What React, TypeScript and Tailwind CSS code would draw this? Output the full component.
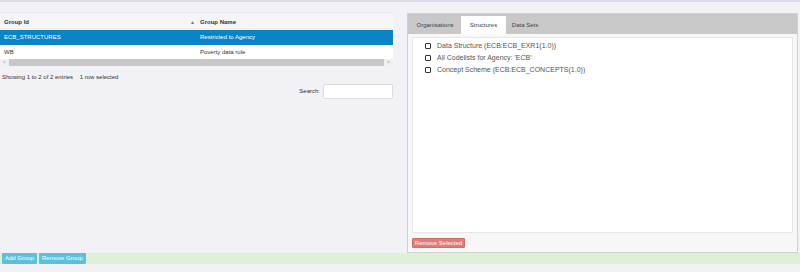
import React from "react";

export default function App() {
  const font = { fontFamily: '"Liberation Sans", Arial, sans-serif' };
  return (
    <div className="w-[800px] h-[272px] bg-[#f2f2f6] flex flex-col overflow-hidden text-[#333]" style={font}>
      <div className="h-[2px] bg-[#dcdce6]" />
      <div className="flex h-[251px]">
        {/* Left */}
        <div className="w-[393px] pt-[10px] flex flex-col">
          <div className="border-t border-[#e8e8ee] h-[18px] flex items-end pb-[4px] text-[6px] leading-[7px] font-bold bg-[#f5f5f8]">
            <div className="w-[190px] pl-[4px]">Group Id</div>
            <div className="w-[8px] text-[5px] text-[#777] font-normal">▲</div>
            <div className="pl-[2px]">Group Name</div>
          </div>
          <div className="h-[15px] flex items-center text-[6px] bg-[#0a84c4] text-white">
            <div className="w-[200px] pl-[4px]">ECB_STRUCTURES</div>
            <div>Restricted to Agency</div>
          </div>
          <div className="h-[14px] flex items-center text-[6px] bg-white">
            <div className="w-[200px] pl-[4px]">WB</div>
            <div>Poverty data rule</div>
          </div>
          <div className="h-[7px] flex items-center bg-[#f0f0f0]">
            <div className="w-[9px] text-[5px] text-[#888] text-center leading-none">&lt;</div>
            <div className="flex-1 h-full bg-[#c8c8c8]" />
            <div className="w-[9px] text-[5px] text-[#888] text-center leading-none">&gt;</div>
          </div>
          <div className="text-[6px] pl-[2px] mt-[7px] leading-[8px] whitespace-pre">
            {"Showing 1 to 2 of 2 entries    1 row selected"}
          </div>
          <div className="flex justify-end items-center mt-[3px]">
            <span className="text-[6px] mr-[3px]">Search:</span>
            <div className="w-[70px] h-[15px] bg-white border border-[#ddd] rounded-[2px]" />
          </div>
        </div>
        {/* Right panel */}
        <div className="ml-[14px] mt-[11px] w-[391px] h-[240px] bg-[#f7f7f7] border border-[#d0d0d0] flex flex-col">
          <div className="h-[20px] bg-[#c8c8c8] flex items-end pl-[1px] text-[6px] text-[#444]">
            <div className="w-[52px] h-[18px] flex items-center justify-center">Organisations</div>
            <div className="w-[45px] h-[18px] flex items-center justify-center bg-white">Structures</div>
            <div className="w-[38px] h-[18px] flex items-center justify-center">Data Sets</div>
          </div>
          <div className="mx-[4px] mt-[3px] h-[196px] bg-white border border-[#e6e6e6] pt-[2px]">
            {[
              "Data Structure (ECB:ECB_EXR1(1.0))",
              "All Codelists for Agency: 'ECB'",
              "Concept Scheme (ECB:ECB_CONCEPTS(1.0))",
            ].map((t) => (
              <div key={t} className="h-[12px] flex items-center text-[7px] text-[#555]">
                <div className="ml-[12px] w-[6px] h-[6px] border border-[#333] rounded-[1px] bg-white" />
                <span className="ml-[6px]">{t}</span>
              </div>
            ))}
          </div>
          <div className="mx-[4px] mt-[5px] w-[53px] h-[10px] bg-[#e07b79] border border-[#d86a68] rounded-[1px] text-[6px] whitespace-nowrap text-white flex items-center justify-center">
            Remove Selected
          </div>
        </div>
      </div>
      <div className="h-[11px] bg-[#dff0d8] flex items-center pl-[2px] gap-[2px]">
        <div className="h-[11px] px-[3px] bg-[#5bc0de] text-white text-[6px] flex items-center rounded-[1px]">Add Group</div>
        <div className="h-[11px] px-[3px] bg-[#5bc0de] text-white text-[6px] flex items-center rounded-[1px]">Remove Group</div>
      </div>
    </div>
  );
}
